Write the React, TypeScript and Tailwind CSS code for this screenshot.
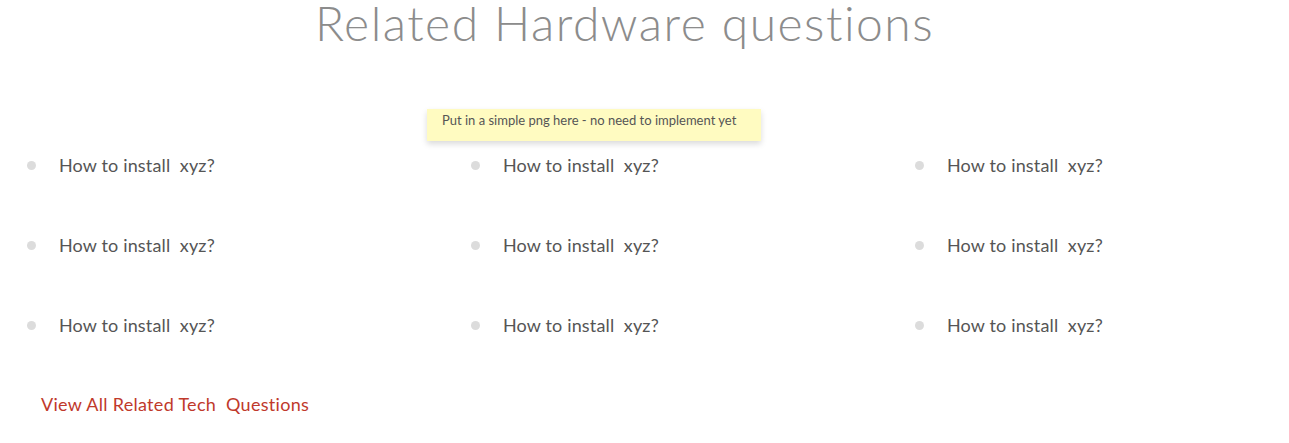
import React from "react";

const rows = [0, 1, 2];
const cols = [0, 1, 2];

export default function App() {
  return (
    <main
      className="relative flow-root w-[1289px] h-[443px] bg-white"
      style={{ fontFamily: "Lato, 'Noto Sans', sans-serif" }}
    >
      <h1 className="-mt-[6px] pl-[315px] text-[48px] leading-[58px] font-light text-[#8c8c8c] tracking-[1.5px] whitespace-nowrap">
        Related Hardware questions
      </h1>

      <div className="absolute left-[427px] top-[109px] w-[334px] h-[32px] bg-[#fffbc1] shadow-[0_3px_6px_rgba(0,0,0,0.15)] pl-[15px] pt-[2px] text-[13px] text-[#555]">
        Put in a simple png here - no need to implement yet
      </div>

      <div className="mt-[101px] pl-[27px] flex flex-col gap-[56px]">
        {rows.map((r) => (
          <div key={r} className="grid grid-cols-[444px_444px_1fr]">
            {cols.map((c) => (
              <div key={c} className="flex items-center h-[24px]">
                <span className="w-[9px] h-[9px] rounded-full bg-[#dcdcdc]" />
                <span className="ml-[23px] text-[18px] text-[#555] tracking-[0.15px]">How to install&nbsp; xyz?</span>
              </div>
            ))}
          </div>
        ))}
      </div>

      <a href="#" className="inline-block mt-[54px] ml-[41px] text-[18px] text-[#c0392b] tracking-[0.3px]">
        View All Related Tech&nbsp; Questions
      </a>
    </main>
  );
}
